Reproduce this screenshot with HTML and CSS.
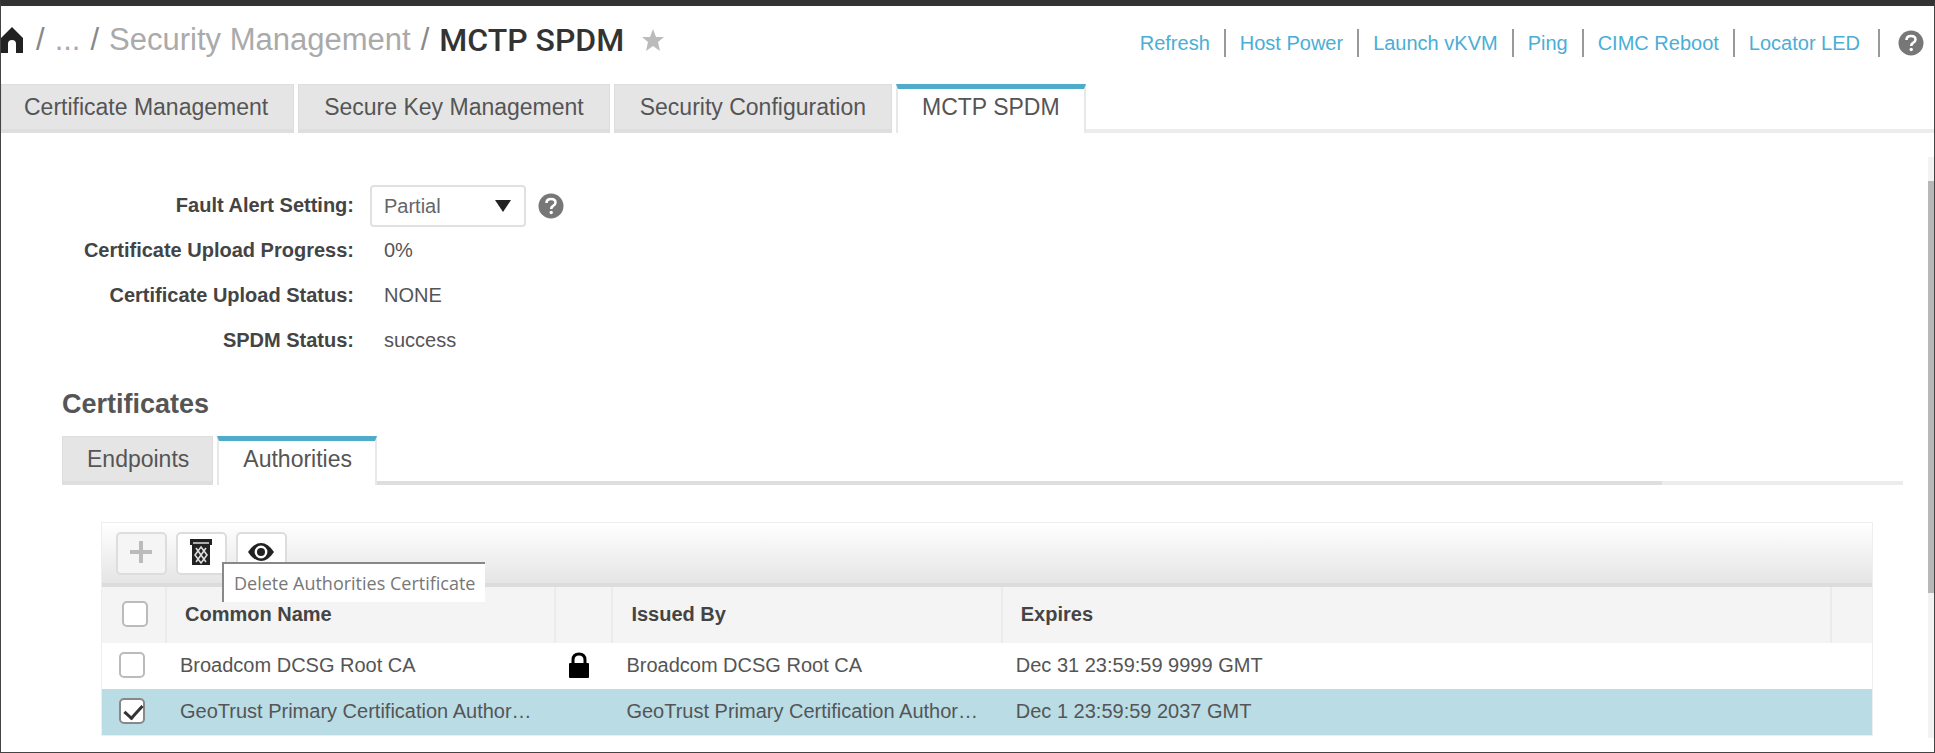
FILE: index.html
```html
<!DOCTYPE html>
<html lang="en">
<head>
    <meta charset="UTF-8">
    <meta name="viewport" content="width=device-width, initial-scale=1.0">
    <title>MCTP SPDM</title>
    <link rel="stylesheet" href="styles.css">
</head>
<body>
    <div class="page">
        <!-- Header -->
        <header>
            <nav class="breadcrumb" aria-label="Breadcrumb">
                <a href="#" class="home" aria-label="Home">
                    <svg width="22" height="26" viewBox="0 0 22 26"><path d="M11 0 L22 11 V26 H15 V17 Q15 13 11 13 Q7 13 7 17 V26 H0 V11 Z" fill="#222"/></svg>
                </a>
                <span class="slash">/</span>
                <a href="#">...</a>
                <span class="slash">/</span>
                <a href="#">Security Management</a>
                <span class="slash">/</span>
                <h1>MCTP SPDM</h1>
                <button class="star" aria-label="Add to favorites">
                    <svg width="22" height="22" viewBox="0 0 22 22"><path d="M11 0 L14 8 L22 8 L16 13 L18 22 L11 17 L4 22 L6 13 L0 8 L8 8 Z" fill="#bbb"/></svg>
                </button>
            </nav>
            <nav class="actions">
                <a href="#">Refresh</a>
                <a href="#">Host Power</a>
                <a href="#">Launch vKVM</a>
                <a href="#">Ping</a>
                <a href="#">CIMC Reboot</a>
                <a href="#">Locator LED</a>
                <button class="help" aria-label="Help">
                    <svg width="26" height="26" viewBox="0 0 26 26"><circle cx="13" cy="13" r="12.5" fill="#777"/><path d="M8.5 10 Q8.5 6 13 6 Q17.500 6 17.500 9.500 Q17.500 11.500 15 13 Q13.200 14 13.200 16" fill="none" stroke="#fff" stroke-width="2.600"/><circle cx="13.200" cy="19.500" r="1.700" fill="#fff"/></svg>
                </button>
            </nav>
        </header>

        <!-- Main Tabs -->
        <nav class="tabs main-tabs">
            <button class="tab">Certificate Management</button>
            <button class="tab">Secure Key Management</button>
            <button class="tab">Security Configuration</button>
            <button class="tab active">MCTP SPDM</button>
            <span class="tab-line"></span>
        </nav>

        <div class="body-area">
            <main>
                <!-- Settings -->
                <div class="settings">
                    <label for="fault-alert">Fault Alert Setting:</label>
                    <div class="field">
                        <span class="select-box">
                            <select id="fault-alert">
                                <option>Partial</option>
                            </select>
                        </span>
                        <button class="help" aria-label="Fault alert help">
                            <svg width="26" height="26" viewBox="0 0 26 26"><circle cx="13" cy="13" r="12.5" fill="#777"/><path d="M8.5 10 Q8.5 6 13 6 Q17.500 6 17.500 9.500 Q17.500 11.500 15 13 Q13.200 14 13.200 16" fill="none" stroke="#fff" stroke-width="2.600"/><circle cx="13.200" cy="19.500" r="1.700" fill="#fff"/></svg>
                        </button>
                    </div>
                    <span class="name">Certificate Upload Progress:</span>
                    <span class="value">0%</span>
                    <span class="name">Certificate Upload Status:</span>
                    <span class="value">NONE</span>
                    <span class="name">SPDM Status:</span>
                    <span class="value">success</span>
                </div>

                <!-- Certificates -->
                <h2>Certificates</h2>
                <nav class="tabs cert-tabs">
                    <button class="tab">Endpoints</button>
                    <button class="tab active">Authorities</button>
                    <span class="tab-line dark"></span>
                    <span class="tab-line end"></span>
                </nav>

                <div class="panel">
                    <div class="toolbar">
                        <button disabled aria-label="Add">
                            <svg width="24" height="24" viewBox="0 0 24 24"><path d="M12 1 V23 M1 12 H23" stroke="#bbb" stroke-width="4"/></svg>
                        </button>
                        <div class="tip-anchor">
                            <button aria-label="Delete">
                                <svg width="22" height="26" viewBox="0 0 22 26"><path d="M0 0 H22 V6 H20 V26 H2 V6 H0 Z" fill="#222"/><path d="M3 4 H19 M6 9 L16 23 M16 9 L6 23 M11 8 L17 16 L11 24 L5 16 Z" stroke="#ddd" stroke-width="1.600" fill="none"/></svg>
                            </button>
                            <span class="tooltip" role="tooltip">Delete Authorities Certificate</span>
                        </div>
                        <button aria-label="View">
                            <svg width="26" height="20" viewBox="0 0 26 20"><path d="M0 10 Q6 1 13 1 Q20 1 26 10 Q20 19 13 19 Q6 19 0 10 Z" fill="#222"/><circle cx="13" cy="10" r="5.200" fill="none" stroke="#fff" stroke-width="2.400"/></svg>
                        </button>
                    </div>
                    <table>
                        <colgroup>
                            <col class="col-check">
                            <col class="col-name">
                            <col class="col-lock">
                            <col class="col-name">
                            <col>
                            <col class="col-end">
                        </colgroup>
                        <thead>
                            <tr>
                                <th><input type="checkbox" aria-label="Select all"></th>
                                <th>Common Name</th>
                                <th></th>
                                <th>Issued By</th>
                                <th>Expires</th>
                                <th></th>
                            </tr>
                        </thead>
                        <tbody>
                            <tr>
                                <td><input type="checkbox" aria-label="Select Broadcom DCSG Root CA"></td>
                                <td>Broadcom DCSG Root CA</td>
                                <td>
                                    <svg width="20" height="26" viewBox="0 0 20 26"><path d="M4 13 V8 Q4 2 10 2 Q16 2 16 8 V13" fill="none" stroke="#000" stroke-width="3"/><rect x="0" y="11" width="20" height="15" rx="1" fill="#000"/></svg>
                                </td>
                                <td>Broadcom DCSG Root CA</td>
                                <td>Dec 31 23:59:59 9999 GMT</td>
                                <td></td>
                            </tr>
                            <tr class="selected">
                                <td><input type="checkbox" checked aria-label="Select GeoTrust Primary Certification Authority"></td>
                                <td>GeoTrust Primary Certification Author…</td>
                                <td></td>
                                <td>GeoTrust Primary Certification Author…</td>
                                <td>Dec 1 23:59:59 2037 GMT</td>
                                <td></td>
                            </tr>
                        </tbody>
                    </table>
                </div>
            </main>

            <!-- Scroll track -->
            <div class="scroll-track">
                <div class="scroll-thumb"></div>
            </div>
        </div>
    </div>
</body>
</html>
```
FILE: styles.css
```css
/* General Styles */
* {
    box-sizing: border-box;
}
body {
    margin: 0;
    background: #fff;
    color: #555;
    font-family: "Liberation Sans", Arial, sans-serif;
    font-size: 20px;
}
.page {
    min-height: 100vh;
    display: flex;
    flex-direction: column;
    border: 1px solid #444;
    border-top: 6px solid #333;
}
a {
    text-decoration: none;
}
button {
    margin: 0;
    padding: 0;
    border: none;
    background: none;
    font: inherit;
    color: inherit;
    cursor: pointer;
}
svg {
    display: block;
}

/* Header */
header {
    display: flex;
    justify-content: space-between;
    align-items: flex-start;
    height: 78px;
}
.breadcrumb {
    display: flex;
    align-items: center;
    height: 68px;
    font-size: 31px;
    line-height: 36px;
}
.breadcrumb a {
    color: #aaa;
}
.breadcrumb .home {
    margin-right: 3px;
}
.slash {
    color: #888;
    margin: 0 10px;
}
.breadcrumb h1 {
    margin: 0;
    font-family: Roboto, "Liberation Sans", sans-serif;
    font-size: 32px;
    font-weight: 500;
    color: #333;
}
.star {
    margin-left: 18px;
}
.actions {
    display: flex;
    align-items: center;
    height: 74px;
    padding-right: 10px;
}
.actions a {
    color: #4aaed6;
    line-height: 28px;
    padding: 0 14px;
    border-right: 2px solid #999;
}
.actions a:last-of-type {
    padding-right: 18px;
}
.actions .help {
    margin-left: 18px;
}

/* Tabs */
.tabs {
    display: flex;
    align-items: stretch;
    height: 49px;
    font-size: 23px;
}
.tab {
    padding: 0 25px;
    margin-right: 4px;
    background: #e5e5e5;
    border: 1px solid #ddd;
    border-bottom: 4px solid #dedede;
    color: #555;
    white-space: nowrap;
}
.tab.active {
    padding: 0 24px 8px;
    margin-right: 0;
    background: #fff;
    border: 2px solid #e8e8e8;
    border-top: 5px solid #4fabca;
    border-bottom: none;
}
.main-tabs .tab:first-child {
    padding-left: 22px;
}
.tab-line {
    flex: 3;
    border-bottom: 4px solid #ececec;
}
.tab-line.dark {
    border-bottom-color: #dedede;
    flex: 16;
}
.cert-tabs {
    margin-right: 25px;
}
.cert-tabs .tab {
    padding-left: 24px;
    padding-right: 23px;
}

/* Content area */
.body-area {
    flex: 1;
    display: flex;
}
main {
    flex: 1;
    padding: 50px 0 14px 61px;
}
.settings {
    display: grid;
    grid-template-columns: 292px 1fr;
    grid-auto-rows: 45px;
    column-gap: 16px;
    align-items: center;
}
.settings label,
.settings .name {
    text-align: right;
    font-weight: bold;
    color: #444;
}
.settings .value {
    padding-left: 14px;
}
.field {
    display: flex;
    align-items: center;
    gap: 12px;
}
.select-box {
    position: relative;
}
.select-box select {
    display: block;
    appearance: none;
    width: 156px;
    height: 42px;
    padding: 0 12px;
    border: 2px solid #e0e0e0;
    border-radius: 4px;
    background: #fff;
    color: #666;
    font: inherit;
}
.select-box::after {
    content: "";
    position: absolute;
    right: 15px;
    top: 15px;
    border: 8px solid transparent;
    border-top: 12px solid #222;
    border-bottom: none;
    pointer-events: none;
}
h2 {
    margin: 25px 0 16px;
    font-size: 27px;
    line-height: 32px;
    color: #555;
}

/* Certificate panel */
.panel {
    margin: 37px 55px 0 39px;
    border: 1px solid #eee;
}
.toolbar {
    display: flex;
    gap: 9px;
    height: 64px;
    padding: 9px 14px;
    background: linear-gradient(#fff, #e5e5e5);
    border-bottom: 4px solid #dcdcdc;
}
.toolbar button {
    display: flex;
    justify-content: center;
    align-items: center;
    width: 51px;
    height: 43px;
    padding: 0 2px 4px 0;
    background: #fff;
    border: 2px solid #ddd;
    border-radius: 5px;
}
.toolbar button:disabled {
    background: #f5f5f5;
}
.tip-anchor {
    position: relative;
}
.tooltip {
    position: absolute;
    left: 46px;
    top: 30px;
    z-index: 1;
    padding: 0 10px;
    background: #fff;
    border-top: 2px solid #888;
    border-left: 2px solid #888;
    font-family: "Open Sans", "Noto Sans", sans-serif;
    font-size: 18px;
    line-height: 38px;
    color: #777;
    white-space: nowrap;
}
table {
    width: 100%;
    table-layout: fixed;
    border-collapse: collapse;
}
.col-check {
    width: 64px;
}
.col-name {
    width: 22%;
}
.col-lock {
    width: 57px;
}
.col-end {
    width: 41px;
}
th,
td {
    height: 46px;
    padding: 0 0 2px 14px;
    text-align: left;
    white-space: nowrap;
}
th {
    height: 56px;
    padding-left: 18px;
    background: #f4f4f4;
    border-right: 2px solid #ebebeb;
    color: #444;
}
th:first-child {
    padding-left: 20px;
}
td:first-child {
    padding-left: 17px;
}
th:last-child {
    border-right: none;
}
.selected td {
    background: #b9dce5;
}
input[type="checkbox"] {
    appearance: none;
    display: block;
    position: relative;
    width: 26px;
    height: 26px;
    margin: 0;
    background: #fff;
    border: 2px solid #bbb;
    border-radius: 5px;
}
input[type="checkbox"]:checked {
    border-color: #888;
}
input[type="checkbox"]:checked::after {
    content: "";
    position: absolute;
    left: 7px;
    top: 1px;
    width: 8px;
    height: 15px;
    border: solid #333;
    border-width: 0 3px 3px 0;
    transform: rotate(42deg);
}

/* Scroll track */
.scroll-track {
    width: 6px;
    margin: 24px 0 14px;
    padding-top: 24px;
    background: #f3f3f3;
}
.scroll-thumb {
    height: 74%;
    background: #b8b8b8;
}
```
